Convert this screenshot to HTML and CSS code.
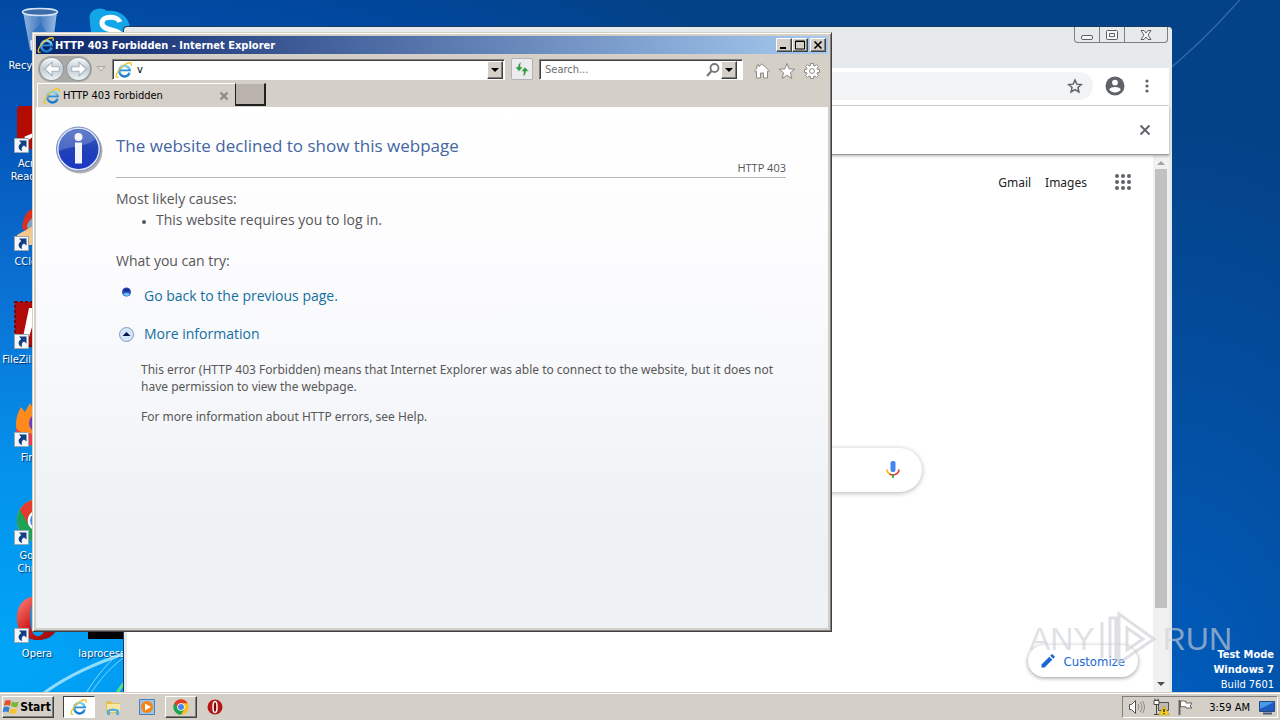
FILE: index.html
```html
<!DOCTYPE html>
<html lang="en">
<head>
  <meta charset="UTF-8">
  <meta name="viewport" content="width=device-width, initial-scale=1.0">
  <title>HTTP 403 Forbidden</title>
  <link rel="stylesheet" href="styles.css">
</head>
<body>
  <!-- shared icons -->
  <svg class="defs" aria-hidden="true">
    <defs>
      <linearGradient id="ieBlue" x1="0" y1="0" x2="0" y2="1"><stop offset="0" stop-color="#7fd4f7"/><stop offset="1" stop-color="#1679c8"/></linearGradient>
      <linearGradient id="ballBlue" x1="0" y1="0" x2="0" y2="1"><stop offset="0" stop-color="#3f63bd"/><stop offset=".5" stop-color="#2142b8"/><stop offset="1" stop-color="#1c35c4"/></linearGradient>
      <linearGradient id="operaRed" x1="0" y1="0" x2="1" y2="1"><stop offset="0" stop-color="#ff8a80"/><stop offset=".5" stop-color="#d21a1a"/><stop offset="1" stop-color="#8c0505"/></linearGradient>
      <linearGradient id="bin" x1="0" y1="0" x2="1" y2="0"><stop offset="0" stop-color="#a9c8ea"/><stop offset=".5" stop-color="#4f83c4"/><stop offset="1" stop-color="#b9d2ee"/></linearGradient>
      <symbol id="ie" viewBox="0 0 18 18">
        <path d="M14.600 11.600A5.300 5.300 0 1 1 14.700 9" fill="none" stroke="url(#ieBlue)" stroke-width="2.500"/>
        <path d="M4.600 9.400h11.300" stroke="#2b92d8" stroke-width="1.800"/>
        <path d="M3.600 16C.6 17.600.2 14.400 3.200 10 6.600 5.200 12.500 1 15.600 1.900c1.200.4.9 1.800.2 3" fill="none" stroke="#ecc52a" stroke-width="1.300"/>
      </symbol>
      <symbol id="chrome" viewBox="0 0 48 48">
        <circle cx="24" cy="24" r="23" fill="#fbc116"/>
        <path d="M4.100 12.500A23 23 0 0 0 24 47l10-17.300L24 24z" fill="#1da355"/>
        <path d="M4.100 12.500 14 29.700 24 24 24 12.500z" fill="#1da355"/>
        <path d="M4.100 12.500A23 23 0 0 1 43.900 12.500H24a11.500 11.500 0 0 0-10 17z" fill="#e33b2e"/>
        <circle cx="24" cy="24" r="11.500" fill="#fff"/><circle cx="24" cy="24" r="9" fill="#4a86ec"/>
      </symbol>
      <symbol id="opera" viewBox="0 0 48 48">
        <path fill="url(#operaRed)" fill-rule="evenodd" d="M24 1C9 1 2 11 2 24s7 23 22 23 22-10 22-23S39 1 24 1zm0 4c6 0 8 8 8 19s-2 19-8 19-8-8-8-19 2-19 8-19z"/>
      </symbol>
      <symbol id="shortcut" viewBox="0 0 15 15">
        <path d="M.5.5h14v14H.5z" fill="#f4f7fa" stroke="#9aa7b5"/>
        <path d="M5 2.500h7.500v7L10 7.400C7.500 8.500 7.500 10.500 8 13 4.500 11.500 3 8 7.200 4.900z" fill="#123f86"/>
      </symbol>
    </defs>
  </svg>

  <main class="desktop">
    <svg class="rays" viewBox="0 0 160 80" aria-hidden="true">
      <path d="M44 81C70 62 98 50 130 40" stroke="#bff0ff" stroke-width="3" opacity=".75"/>
      <path d="M86 81C95 67 103 56 114 46M91 81c9-14 18-24 32-35" stroke="#9fe4ff" opacity=".8"/>
      <path d="M117 81c3-5 6-9 10-13" stroke="#5be08a" stroke-width="3"/>
    </svg>
    <svg class="ray-top" viewBox="0 0 100 70" aria-hidden="true"><path d="M4 62C30 42 50 22 70-1" stroke="#6aa0dd" stroke-width="1" opacity=".45"/></svg>

    <ul class="shortcuts">
      <li>
        <svg viewBox="0 0 48 48"><path d="M10 5h34l-5 38q-11 5-22 0z" fill="url(#bin)" opacity=".85"/><ellipse cx="27" cy="5" rx="17.500" ry="3.500" fill="#3d6cab" stroke="#d6e4f4" stroke-width="1.500"/><path d="m20 24 8-8 6 10-4 10-10-2z" fill="#2e6fc6" opacity=".7"/><path d="M17 34q4-4 8 0v10q-4 1-7-1z" fill="#dce8f2"/></svg>
        <span>Recycle Bin</span>
      </li>
      <li>
        <svg viewBox="0 0 48 48"><rect x="4" y="1" width="43" height="43" rx="4" fill="#b30b00"/><path d="M13 35c10-6 17-17 14-26M12 33c8-4 20-7 28-4M26 14c0 8 7 14 14 16" fill="none" stroke="#fff" stroke-width="3"/><use href="#shortcut" x="1" y="33" width="15" height="15"/></svg>
        <span>Acrobat<br>Reader DC</span>
      </li>
      <li>
        <svg viewBox="0 0 48 48"><path d="M9 26C10 14 14 4 28 4l14 10v20z" fill="#d9301f"/><path d="M14 22q5-12 19-8v18l-17 4z" fill="#7aa6c8"/><path d="M4 32 20 23l14 11-12 8H8z" fill="#f3c98b"/><use href="#shortcut" x="1" y="33" width="15" height="15"/></svg>
        <span>CCleaner</span>
      </li>
      <li>
        <svg viewBox="0 0 48 48"><path d="M2 1h44v44H2z" fill="#b20a08" stroke="#7a0505" stroke-width="2" stroke-dasharray="3 2"/><path d="M10 36 16 7h24l-2 6H23l-2 7h11l-2 6H19l-3 10z" fill="#fff"/><use href="#shortcut" x="1" y="33" width="15" height="15"/></svg>
        <span>FileZilla Client</span>
      </li>
      <li>
        <svg viewBox="0 0 48 48"><path d="M3 26C3 17 6 12 8 8l4 5 5-9 4 7C37 5 46 14 46 26 46 55 3 54 3 26z" fill="#ff8a1c"/><path d="M3 29c3 4 8 6 14 5l14 11C16 50 3 42 3 29z" fill="#f2384a"/><circle cx="26" cy="24" r="10" fill="#6a3bc4"/><use href="#shortcut" x="1" y="33" width="15" height="15"/></svg>
        <span>Firefox</span>
      </li>
      <li>
        <svg viewBox="0 0 48 48"><use href="#chrome" x="3" y="1" width="45" height="45"/><use href="#shortcut" x="1" y="33" width="15" height="15"/></svg>
        <span>Google<br>Chrome</span>
      </li>
      <li>
        <svg viewBox="0 0 48 48"><use href="#opera" x="2" y="0" width="46" height="46"/><use href="#shortcut" x="1" y="33" width="15" height="15"/></svg>
        <span>Opera</span>
      </li>
      <li>
        <svg viewBox="0 0 48 48"><path d="M3 14C0 4 12-2 20 4c14-2 25 8 23 23 4 12-8 21-17 14C11 43 3 31 3 14z" fill="#12a5e8"/><path d="M33 15c-2-6-18-7-18 1 0 9 19 5 19 14 0 9-19 8-20 0" fill="none" stroke="#fff" stroke-width="5"/></svg>
        <span>Skype</span>
      </li>
      <li class="last-row">
        <svg viewBox="0 0 48 48"><path d="M1 6h47v38H1z"/></svg>
        <span>laprocess.jpg</span>
      </li>
    </ul>

    <div class="build"><b>Test Mode</b><b>Windows 7</b><span>Build 7601</span></div>

    <section class="chrome-window">
      <header class="chrome-frame">
        <div class="aero-buttons">
          <button aria-label="Minimize"><svg width="14" height="12" viewBox="0 0 14 12"><rect x="1.500" y="6.500" width="11" height="4" rx="1.500"/></svg></button>
          <button aria-label="Restore"><svg width="14" height="12" viewBox="0 0 14 12"><rect x="1.500" y="1.500" width="11" height="9" rx="1"/><path d="M4.500 4.500h5v3h-5z"/></svg></button>
          <button class="wide" aria-label="Close"><svg width="14" height="12" viewBox="0 0 14 12"><path d="M2 1.500h3l2 2.500 2-2.500h3L9 6l3 4.500H9L7 8l-2 2.500H2L5 6z"/></svg></button>
        </div>
      </header>
      <div class="chrome-toolbar">
        <div class="omnibox">
          <svg width="16" height="16" viewBox="0 0 24 24"><path d="m12 3 2.700 6.200 6.800.6-5.100 4.500 1.500 6.700-5.900-3.500L6.100 21l1.500-6.700-5.100-4.500 6.800-.6z" fill="none" stroke="#5f6368" stroke-width="2.200"/></svg>
        </div>
        <svg width="20" height="20" viewBox="0 0 20 20"><circle cx="10" cy="10" r="9.500" fill="#5f6368"/><circle cx="10" cy="6.600" r="2.900" fill="#fff"/><path d="M4.200 13.400c1.300-3.300 10.300-3.300 11.600 0-2.400 4-9.200 4-11.600 0z" fill="#fff"/></svg>
        <svg width="16" height="16" viewBox="0 0 16 16" fill="#5f6368"><circle cx="8" cy="3" r="1.600"/><circle cx="8" cy="8" r="1.600"/><circle cx="8" cy="13" r="1.600"/></svg>
      </div>
      <div class="infobar">
        <button aria-label="Dismiss"><svg width="12" height="12" viewBox="0 0 12 12"><path d="m1.500 1.500 9 9m0-9-9 9" stroke="#5f6368" stroke-width="1.800"/></svg></button>
      </div>
      <div class="chrome-view">
        <div class="google">
          <nav class="google-nav">
            <a href="#">Gmail</a>
            <a href="#">Images</a>
            <svg width="18" height="18" viewBox="0 0 18 18" fill="#5f6368"><circle cx="3" cy="3" r="2"/><circle cx="9" cy="3" r="2"/><circle cx="15" cy="3" r="2"/><circle cx="3" cy="9" r="2"/><circle cx="9" cy="9" r="2"/><circle cx="15" cy="9" r="2"/><circle cx="3" cy="15" r="2"/><circle cx="9" cy="15" r="2"/><circle cx="15" cy="15" r="2"/></svg>
          </nav>
          <div class="google-search">
            <svg width="20" height="20" viewBox="0 0 20 20" fill="none"><rect x="7.500" y="1" width="5" height="11" rx="2" fill="#4285f4"/><path d="M4 9.500c0 2.200 1.200 3.700 3 4.600" stroke="#fbbc05" stroke-width="1.700"/><path d="M6.500 13.900c4 2.300 9.500 0 9.500-4.400" stroke="#ea4335" stroke-width="1.700"/><path d="M10 14.500V18" stroke="#34a853" stroke-width="1.800"/></svg>
          </div>
          <button class="customize">
            <svg width="16" height="16" viewBox="0 0 16 16" fill="#1967d2"><path d="M1.500 14.500v-3l7.800-7.800 3 3-7.800 7.800zM10.200 2.800l1.300-1.300q.6-.5 1.200 0l1.800 1.800q.5.6 0 1.200l-1.300 1.300z"/></svg>
            Customize
          </button>
        </div>
        <div class="scrollbar">
          <svg width="16" height="14" viewBox="0 0 16 14"><path d="m8 6 4 4H4z" fill="#a3a3a3"/></svg>
          <div class="thumb"></div>
          <svg width="16" height="14" viewBox="0 0 16 14"><path d="m8 8 4-4H4z" fill="#505050"/></svg>
        </div>
      </div>
    </section>

    <section class="ie-window">
      <header class="titlebar">
        <svg width="18" height="18"><use href="#ie"/></svg>
        <h1>HTTP 403 Forbidden - Internet Explorer</h1>
        <button aria-label="Minimize"><svg width="12" height="10" viewBox="0 0 12 10"><path d="M2 8h6" stroke="#000" stroke-width="2"/></svg></button>
        <button aria-label="Maximize"><svg width="12" height="10" viewBox="0 0 12 10"><path d="M1.500 1h9v8h-9zM1 1.500h10" fill="none" stroke="#000"/></svg></button>
        <button class="close" aria-label="Close"><svg width="12" height="10" viewBox="0 0 12 10"><path d="m2.500 1.500 7 7m0-7-7 7" stroke="#000" stroke-width="1.600"/></svg></button>
      </header>

      <div class="navbar">
        <div class="history">
          <button aria-label="Back"><svg width="18" height="18" viewBox="0 0 16 16"><path d="M1.500 8 8 2v4h6.500v4H8v4z" fill="#fff" stroke="#a9b3bb"/></svg></button>
          <button aria-label="Forward"><svg width="18" height="18" viewBox="0 0 16 16"><path d="M14.500 8 8 2v4H1.500v4H8v4z" fill="#fff" stroke="#a9b3bb"/></svg></button>
        </div>
        <svg class="recent" width="10" height="6" viewBox="0 0 10 6"><path d="M1 .5h8L5 5z" fill="#e6e3de" stroke="#aaa69e"/></svg>
        <div class="field address">
          <svg width="18" height="18"><use href="#ie"/></svg>
          <input type="text" value="v" aria-label="Address">
          <button class="drop" aria-label="Show address list"><svg width="8" height="4" viewBox="0 0 8 4"><path d="M0 0h8L4 4z"/></svg></button>
        </div>
        <button class="refresh" aria-label="Refresh"><svg width="18" height="18" viewBox="0 0 18 18"><path d="M8.500 2.500C5.500 2.500 5 5 5 7H2l4 4.500L10 7H7.500c0-2 0-3 1-4.500zM9.500 16c3 0 3.500-2.500 3.500-4.500h3L12 7l-4 4.500h2.500c0 2 0 3-1 4.500z" fill="#2f9a3f" stroke="#ecebef" stroke-width=".6"/></svg></button>
        <div class="field search">
          <input type="text" placeholder="Search..." aria-label="Search">
          <svg width="16" height="16" viewBox="0 0 16 16"><circle cx="9.500" cy="6" r="4" fill="none" stroke="#777" stroke-width="1.800"/><path d="m6.500 9-4.500 5" stroke="#777" stroke-width="2.200"/></svg>
          <button class="drop" aria-label="Search options"><svg width="8" height="4" viewBox="0 0 8 4"><path d="M0 0h8L4 4z"/></svg></button>
        </div>
        <div class="tools">
          <button aria-label="Home"><svg width="18" height="18" viewBox="0 0 18 18"><path d="m9 1.800 7.500 7-1 1.200-1-.8v6.800h-4v-5h-3v5h-4V9.200l-1 .8-1-1.200L4 6.400V3h2v1.600z"/></svg></button>
          <button aria-label="Favorites"><svg width="18" height="18" viewBox="0 0 18 18"><path d="m9 1.500 2.100 5.400 5.700.3-4.400 3.600 1.500 5.700L9 13.300l-4.900 3.200 1.500-5.700-4.400-3.600 5.700-.3z"/></svg></button>
          <button aria-label="Tools"><svg width="18" height="18" viewBox="0 0 18 18"><path d="M7.500 1.500h3v2l1.500.6 1.500-1.500 2 2L14 6.100l.5 1.400h2v3h-2l-.5 1.400 1.500 1.500-2 2-1.500-1.500-1.500.6v2h-3v-2L6 13.900l-1.500 1.500-2-2L4 11.900l-.5-1.400h-2v-3h2L4 6.100 2.500 4.600l2-2L6 4.100l1.500-.6z"/><circle cx="9" cy="9" r="2.500"/></svg></button>
        </div>
      </div>

      <div class="tabs">
        <div class="tab">
          <svg width="18" height="18"><use href="#ie"/></svg>
          <span>HTTP 403 Forbidden</span>
          <button aria-label="Close tab"><svg width="10" height="10" viewBox="0 0 10 10"><path d="m1.500 1.500 7 7m0-7-7 7" stroke="#8b8680" stroke-width="2"/></svg></button>
        </div>
        <button class="new-tab" aria-label="New tab"></button>
      </div>

      <article class="error-page">
        <svg class="info" width="48" height="50" viewBox="0 0 48 50">
          <circle cx="24" cy="25" r="22.500" fill="#000" opacity=".3"/>
          <circle cx="22.500" cy="23" r="22" fill="url(#ballBlue)" stroke="#8393b5"/>
          <circle cx="22.500" cy="23" r="20.700" fill="none" stroke="#dfe7fb" stroke-width="1.500"/>
          <path d="M2.500 23a20 20 0 0 1 37-10C33 20 20 19 2.500 25z" fill="#fff" opacity=".2"/>
          <circle cx="22.500" cy="11" r="4" fill="#f4f5f8"/><path d="M19 16.500h7v21h-7z" fill="#f4f5f8"/>
        </svg>
        <div class="error-body">
          <h2>The website declined to show this webpage</h2>
          <p class="code">HTTP 403</p>
          <p class="lead">Most likely causes:</p>
          <ul class="causes"><li>This website requires you to log in.</li></ul>
          <p class="lead try">What you can try:</p>
          <div class="action">
            <svg width="16" height="16" viewBox="0 0 16 16"><circle cx="8.500" cy="6" r="4.500" fill="#2850c4"/><ellipse cx="8.500" cy="4" rx="3" ry="1.500" fill="#1c2f86"/><ellipse cx="8.500" cy="8.300" rx="3" ry="1.600" fill="#6cc0f4"/></svg>
            <a href="#">Go back to the previous page.</a>
          </div>
          <div class="action">
            <svg width="16" height="18" viewBox="0 0 16 18"><circle cx="8.500" cy="10.500" r="7" fill="#d5e6f8" stroke="#7d9cc0"/><path d="m4.500 12 4-4 4 4z" fill="#0a1450"/></svg>
            <a href="#">More information</a>
          </div>
          <div class="details">
            <p>This error (HTTP 403 Forbidden) means that Internet Explorer was able to connect to the website, but it does not have permission to view the webpage.</p>
            <p>For more information about HTTP errors, see Help.</p>
          </div>
        </div>
      </article>
    </section>

    <div class="watermark" aria-hidden="true">
      <span>ANY</span>
      <svg width="60" height="56" viewBox="0 0 60 56" fill="none" stroke="currentColor" stroke-width="3"><path d="M3 11v36M11 47V7h6v42M20 3l35 25-35 24z"/><path d="M28 17l16 11-16 11z"/></svg>
      <span>RUN</span>
    </div>
  </main>

  <footer class="taskbar">
    <button class="start">
      <svg width="18" height="18" viewBox="0 0 18 18"><path d="M3 3q3-2 6 0L8 8Q5 6 2 8z" fill="#e8502a"/><path d="M10 3.500q3 2 6.500 0l-1 5Q12 10 9 8z" fill="#78b833"/><path d="M1.500 9.500q3-2 6 0l-1 5q-3-2-6 0z" fill="#3a7fd0"/><path d="M8.500 10q3 2 6.500 0l-1 5q-3 2-6.500 0z" fill="#f7c22c"/></svg>
      Start
    </button>
    <div class="apps">
      <button class="active" aria-label="Internet Explorer"><svg width="18" height="18"><use href="#ie"/></svg></button>
      <button aria-label="Explorer"><svg width="18" height="18" viewBox="0 0 18 18"><path d="M2 3h5l1 2h8v10H2z" fill="#e3bf58"/><path d="M3 6h13v8H3z" fill="#f8e7a2"/><path d="M3 17v-5q6-3 12 0v5h-3v-4H6v4z" fill="#5aaede"/></svg></button>
      <button aria-label="Media Player"><svg width="18" height="18" viewBox="0 0 18 18"><path d="M1.500 1.500h15v15h-15z" fill="#9cc4ea" stroke="#4b7fb5"/><circle cx="9" cy="9" r="6" fill="#f58512"/><path d="m7 5.500 6 3.500-6 3.500z" fill="#fff"/></svg></button>
      <button class="raised" aria-label="Google Chrome"><svg width="16" height="16"><use href="#chrome"/></svg></button>
      <button aria-label="Opera"><svg width="16" height="16" viewBox="0 0 16 16"><circle cx="8" cy="8" r="7.500" fill="#b51717"/><ellipse cx="8" cy="8" rx="2" ry="5.500" fill="#7c0808" stroke="#fff" stroke-width="1.500"/></svg></button>
    </div>
    <div class="tray">
      <svg width="18" height="18" viewBox="0 0 18 18" fill="#fff" stroke="#55524d"><path d="M1.500 6.500h2l4-4v13l-4-4h-2z"/><path d="M10 6q2 3 0 6M12 4q4 5 0 10M14.500 3q4 6 0 12" fill="none" stroke="#8c8983"/></svg>
      <svg width="18" height="18" viewBox="0 0 18 18"><path d="M6.500 4.500h10v8h-10z" fill="#bdbab4" stroke="#55524d"/><path d="M2 2.500h5v4H2zM4.500 7v9M3 .5v2M6 .5v2M2 16.500h7" fill="#fff" stroke="#444"/><path d="m12 8 5.500 9h-11z" fill="#f6cf28" stroke="#b38c00" stroke-width=".5"/><path d="M12 11v3M12 15v1" stroke="#000" stroke-width="1.200"/></svg>
      <svg width="18" height="18" viewBox="0 0 18 18"><path d="M3.500 2v15" stroke="#66635d" stroke-width="2"/><path d="M4.500 3.500q3-1.500 5.500 0v1.500h6l-2 3 2 2h-6V9q-3-1-5.500 0z" fill="#fff" stroke="#66635d"/></svg>
      <time>3:59 AM</time>
      <svg width="18" height="16" viewBox="0 0 18 16"><path d="M1.500 2.500h15v10h-15z" fill="#1c5cc0" stroke="#284a7c"/><path d="M2 3h14L2 10z" fill="#4a9ae8"/><path d="M5 14.500h9" stroke="#45597a" stroke-width="2"/></svg>
    </div>
  </footer>
</body>
</html>
```
FILE: styles.css
```css
* {
  box-sizing: border-box;
}

body {
  margin: 0;
  height: 100vh;
  display: flex;
  flex-direction: column;
  overflow: hidden;
  font-family: "DejaVu Sans Condensed", "DejaVu Sans", sans-serif;
  font-size: 11px;
  color: #000;
}

svg {
  display: block;
  flex: none;
}

button {
  padding: 0;
  border: 0;
  background: none;
  font: inherit;
  color: inherit;
  display: flex;
  align-items: center;
  justify-content: center;
  flex: none;
}

h1, h2, p, ul {
  margin: 0;
  padding: 0;
}

.defs {
  position: absolute;
  width: 0;
  height: 0;
}

/* desktop */

.desktop {
  flex: 1;
  position: relative;
  overflow: hidden;
  background:
    radial-gradient(ellipse 360px 560px at 92% 100%, rgba(0, 98, 200, 0.8), rgba(0, 90, 190, 0)),
    radial-gradient(ellipse 1150px 800px at 0 96%, #00a6f8 0%, #0492ec 24%, #0a72d4 46%, #0654b8 68%, #00479c 88%, #044288 100%);
}

.rays {
  position: absolute;
  left: 0;
  bottom: 0;
  width: 160px;
  height: 80px;
  fill: none;
}

.ray-top {
  position: absolute;
  right: 0;
  top: 0;
  width: 130px;
  height: 90px;
  fill: none;
}

.shortcuts {
  list-style: none;
  display: grid;
  grid-auto-flow: column;
  grid-template-rows: repeat(7, 98px);
  grid-auto-columns: 74px;
  padding-top: 7px;
}

.shortcuts li {
  display: flex;
  flex-direction: column;
  align-items: center;
  gap: 4px;
  line-height: 13px;
  text-align: center;
  white-space: nowrap;
  color: #fff;
  text-shadow: 1px 1px 1px #00306a;
}

.shortcuts svg {
  width: 48px;
  height: 48px;
}

.shortcuts .last-row {
  grid-row: 7;
}

.build {
  position: absolute;
  right: 6px;
  bottom: 0;
  display: flex;
  flex-direction: column;
  align-items: flex-end;
  line-height: 15px;
  color: #fff;
}

/* chrome window */

.chrome-window {
  position: absolute;
  isolation: isolate;
  left: 123px;
  right: 108px;
  top: 26px;
  bottom: 0;
  display: flex;
  flex-direction: column;
  padding: 0 3px;
  background: #e7eaed;
  border: 1px solid #1d3b5e;
  border-width: 1px 0 0 1px;
  border-radius: 4px 4px 0 0;
}

.chrome-frame {
  height: 41px;
  display: flex;
  justify-content: flex-end;
  align-items: flex-start;
  padding-right: 1px;
}

.aero-buttons {
  display: flex;
  border: 1px solid #7b7f84;
  border-top: 0;
  border-radius: 0 0 4px 4px;
}

.aero-buttons button {
  width: 25px;
  height: 15px;
  border-right: 1px solid #7b7f84;
}

.aero-buttons .wide {
  width: 42px;
  border-right: 0;
}

.aero-buttons svg {
  fill: #f6f7f8;
  stroke: #5c6066;
}

.chrome-toolbar {
  height: 38px;
  display: flex;
  align-items: center;
  gap: 12px;
  padding: 0 14px 2px 0;
  background: #fff;
  border-bottom: 1px solid #d5d7da;
}

.chrome-toolbar > svg + svg {
  margin-left: 2px;
}

.omnibox {
  flex: 1;
  height: 28px;
  display: flex;
  align-items: center;
  justify-content: flex-end;
  padding-right: 10px;
  background: #f1f3f4;
  border-radius: 14px;
}

.infobar {
  position: relative;
  z-index: 1;
  height: 49px;
  display: flex;
  align-items: center;
  justify-content: flex-end;
  padding-right: 18px;
  background: #fff;
  border-bottom: 1px solid #9a9a9a;
  box-shadow: 0 1px 3px rgba(0, 0, 0, 0.3);
}

.chrome-view {
  flex: 1;
  display: flex;
  background: #fff;
}

.google {
  flex: 1;
  position: relative;
  display: flex;
  flex-direction: column;
  align-items: center;
}

.google-nav {
  align-self: stretch;
  display: flex;
  align-items: center;
  justify-content: flex-end;
  gap: 14px;
  height: 54px;
  padding-right: 21px;
  font-family: "Noto Sans", sans-serif;
  font-size: 12px;
}

.google-nav svg {
  margin-left: 13px;
}

.google-nav a {
  color: #222;
  text-decoration: none;
}

.google-search {
  width: 55%;
  height: 44px;
  margin-top: 239px;
  display: flex;
  align-items: center;
  justify-content: flex-end;
  padding-right: 19px;
  border-radius: 22px;
  box-shadow: 0 1px 5px rgba(32, 33, 36, 0.35);
}

.customize {
  position: absolute;
  right: 15px;
  bottom: 15px;
  height: 32px;
  padding: 0 13px 0 12px;
  gap: 8px;
  border-radius: 16px;
  background: #fff;
  box-shadow: 0 1px 4px rgba(0, 0, 0, 0.4);
  font-size: 13px;
  color: #1967d2;
}

.scrollbar {
  width: 16px;
  display: flex;
  flex-direction: column;
  background: #f1f1f1;
}

.thumb {
  flex: 1;
  margin: 0 2px 70px;
  background: #c1c1c1;
}

/* internet explorer window */

.ie-window {
  position: absolute;
  left: 32px;
  top: 32px;
  width: 800px;
  height: 600px;
  display: flex;
  flex-direction: column;
  padding: 2px;
  background: #d4d0c8;
  border: 1px solid;
  border-color: #d4d0c8 #404040 #404040 #d4d0c8;
  box-shadow: inset 1px 1px #fff, inset -1px -1px #808080;
}

.titlebar {
  height: 20px;
  margin: 0 1px;
  display: flex;
  align-items: center;
  padding: 0 2px 0 1px;
  background: linear-gradient(90deg, #0a246a, #a6caf0);
  border: 1px solid #d4d0c8;
  border-width: 1px 0;
  color: #fff;
}

.titlebar h1 {
  flex: 1;
  font-size: 11px;
}

.titlebar button,
.drop {
  width: 16px;
  height: 14px;
  background: #d4d0c8;
  border: 1px solid;
  border-color: #fff #404040 #404040 #fff;
  box-shadow: inset -1px -1px #808080;
}

.titlebar .close {
  margin-left: 2px;
}

.navbar {
  height: 28px;
  display: flex;
  align-items: center;
  padding: 0 8px 0 3px;
}

.history {
  display: flex;
  gap: 2px;
  padding: 1px;
  border-radius: 14px;
  background: #aaa9a5;
}

.history button {
  width: 25px;
  height: 24px;
  border-radius: 50%;
  background: linear-gradient(#f7f9fa, #c2ccd3 50%, #eef3f6);
  border: 1px solid #8e979e;
}

.recent {
  margin: 0 6px 0 4px;
}

.field {
  height: 21px;
  display: flex;
  align-items: center;
  background: #fff;
  border: 1px solid;
  border-color: #808080 #fff #fff #808080;
  box-shadow: inset 1px 1px #404040;
  padding: 1px 1px 0 2px;
}

.field input {
  flex: 1;
  min-width: 0;
  border: 0;
  padding: 0 4px;
  outline: 0;
  background: none;
  font: inherit;
}

.field input::placeholder {
  color: #6d6d6d;
  opacity: 1;
}

.field .drop {
  height: 18px;
}

.address {
  flex: 1;
}

.refresh {
  width: 22px;
  height: 22px;
  margin: 0 6px;
  background: #ecebef;
  border: 1px solid #b4b1b8;
  border-radius: 2px;
}

.search {
  width: 204px;
  padding-right: 5px;
}

.search input {
  padding-left: 3px;
}

.tools {
  display: flex;
  gap: 7px;
  margin-left: 10px;
  padding-top: 3px;
}

.tools svg {
  fill: #fff;
  stroke: #8d8983;
}

.tabs {
  height: 24px;
  display: flex;
  padding-left: 2px;
}

.tab {
  width: 198px;
  display: flex;
  align-items: center;
  gap: 2px;
  padding: 0 6px 0 5px;
  border: 1px solid #fff;
  border-width: 1px 0 0 1px;
}

.tab span {
  flex: 1;
}

.new-tab {
  width: 31px;
  height: 23px;
  background: #bab3ab;
  border: 1px solid;
  border-color: #d4d0c8 #202020 #202020;
  border-width: 1px 2px 2px 1px;
}

.error-page {
  flex: 1;
  display: flex;
  align-items: flex-start;
  gap: 12px;
  margin: 0 1px 1px;
  padding: 19px 42px 0 20px;
  background: linear-gradient(#fff, #fcfcfe 30%, #edf1f4 85%, #eef2f5);
  font-family: "Open Sans", "Noto Sans", sans-serif;
  color: #575757;
}

.error-body {
  flex: 1;
}

.error-body h2 {
  margin-top: 7px;
  font-size: 17px;
  font-weight: 400;
  line-height: 26px;
  color: #4465a2;
}

.code {
  font-size: 11px;
  line-height: 18px;
  text-align: right;
  border-bottom: 1px solid #b4b8be;
}

.lead {
  margin-top: 11px;
  font-size: 14px;
  line-height: 20px;
}

.causes {
  padding-left: 40px;
  font-size: 14px;
  line-height: 22px;
}

.causes li::marker {
  font-size: 10px;
}

.try {
  margin-top: 20px;
}

.action {
  display: flex;
  gap: 10px;
  margin: 15px 0 18px 2px;
  font-size: 14px;
  line-height: 20px;
}

.action a {
  color: #136f9f;
  text-decoration: none;
}

.details {
  margin: -1px 0 0 25px;
  font-family: "Noto Sans", sans-serif;
  font-size: 12px;
  line-height: 17px;
}

.details p {
  margin-bottom: 13px;
}

/* watermark */

.watermark {
  position: absolute;
  right: 48px;
  bottom: 25px;
  display: flex;
  align-items: center;
  gap: 4px;
  font-family: "Liberation Sans", sans-serif;
  font-size: 32px;
  color: rgba(205, 208, 214, 0.65);
}

/* taskbar */

.taskbar {
  height: 28px;
  display: flex;
  align-items: center;
  padding: 3px 2px 1px;
  background: #d4d0c8;
  box-shadow: inset 0 1px #d4d0c8, inset 0 2px #fff;
}

.start,
.apps .raised {
  height: 22px;
  border: 1px solid;
  border-color: #fff #404040 #404040 #fff;
  box-shadow: inset -1px -1px #808080;
}

.start {
  width: 52px;
  padding-right: 3px;
  font-size: 12px;
  font-weight: bold;
}

.apps {
  flex: 1;
  display: flex;
  gap: 2px;
  margin-left: 9px;
}

.apps button {
  width: 32px;
  height: 22px;
}

.apps .active {
  background: #fff;
  border: 1px solid;
  border-color: #404040 #fff #fff #404040;
}

.tray {
  height: 22px;
  display: flex;
  align-items: center;
  gap: 6px;
  padding: 0 1px 0 5px;
  border: 1px solid;
  border-color: #808080 #fff #fff #808080;
}

.tray time {
  margin: 0 2px 0 9px;
}
```
